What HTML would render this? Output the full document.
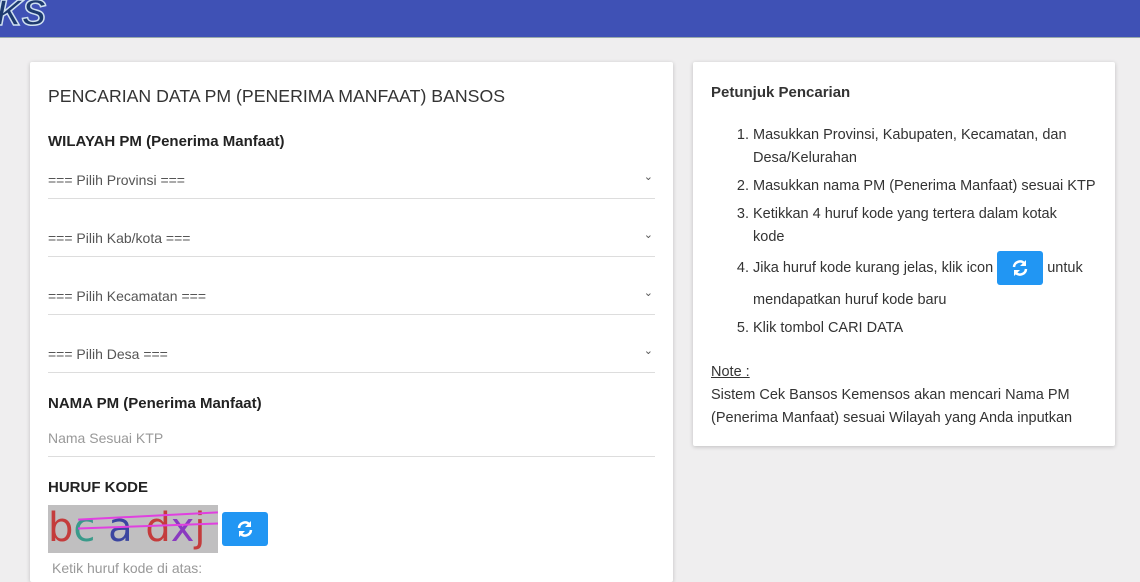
<!DOCTYPE html>
<html><head><style>
body{margin:0;width:1140px;height:570px;overflow:hidden;background:#efeeef;font-family:"Liberation Sans",sans-serif;color:#333;position:relative}
.top{position:absolute;left:0;top:0;width:1140px;height:37px;background:#3f51b5;border-bottom:1px solid #9aa}
.logo{position:absolute;left:-4px;top:-8px;font:italic bold 36px "Liberation Sans",sans-serif;color:#1d3a6e;-webkit-text-stroke:1.5px #cfe0f0}
.card{position:absolute;background:#fff;box-shadow:0 1px 4px rgba(0,0,0,.2);border-radius:2px}
.c1{left:30px;top:62px;width:643px;height:520px}
.c2{left:693px;top:62px;width:422px;height:384px}
.t{position:absolute;left:18px;font-size:17.7px;color:#333}
.h{position:absolute;left:18px;font-weight:bold;font-size:15px;color:#222}
.sel{position:absolute;left:18px;width:607px;height:26px;border-bottom:1px solid #ddd;font-size:14px;color:#555;line-height:16px}
.sel span{position:absolute;right:2px;top:-3px;font-size:11px}
.btn{position:absolute;background:#2196f3;border-radius:3px;text-align:center}
ol{margin:0;padding-left:42px;font-size:14.5px;line-height:23px;color:#333;white-space:nowrap}
li{margin-bottom:5px}
</style></head><body>
<div class="top"><div class="logo">KS</div></div>
<div class="card c1">
<div class="t" style="top:24px">PENCARIAN DATA PM (PENERIMA MANFAAT) BANSOS</div>
<div class="h" style="top:71px">WILAYAH PM (Penerima Manfaat)</div>
<div class="sel" style="top:110px">=== Pilih Provinsi ===<span>⌄</span></div>
<div class="sel" style="top:168px">=== Pilih Kab/kota ===<span>⌄</span></div>
<div class="sel" style="top:226px">=== Pilih Kecamatan ===<span>⌄</span></div>
<div class="sel" style="top:284px">=== Pilih Desa ===<span>⌄</span></div>
<div class="h" style="top:333px">NAMA PM (Penerima Manfaat)</div>
<div class="sel" style="top:368px;color:#999">Nama Sesuai KTP</div>
<div class="h" style="top:417px">HURUF KODE</div>
<div style="position:absolute;left:18px;top:443px;width:170px;height:48px;background:#c0bfc0;overflow:hidden;font-size:40px;line-height:46px;font-family:'DejaVu Sans',sans-serif">
<span style="color:#c43c3c">b</span><span style="color:#3a9a8a">c</span> <span style="color:#3b45a0">a</span> <span style="color:#c43c3c">d</span><span style="color:#8a3ac0">x</span><span style="color:#c43c3c">j</span>
<div style="position:absolute;left:30px;top:10px;width:140px;height:2px;background:#e040e0;transform:rotate(-3deg)"></div>
<div style="position:absolute;left:30px;top:20px;width:140px;height:2px;background:#e040e0;transform:rotate(-2deg)"></div></div>
<div class="btn" style="left:192px;top:450px;width:46px;height:34px"><svg width="20" height="20" viewBox="0 0 20 20" style="margin-top:7px"><path d="M4 9a6 6 0 0 1 10.5-3.5M16 11a6 6 0 0 1-10.5 3.5" stroke="#fff" stroke-width="2.5" fill="none"/><path d="M16 2v6h-6zM4 18v-6h6z" fill="#fff"/></svg></div>
<div style="position:absolute;left:22px;top:498px;font-size:14px;color:#999">Ketik huruf kode di atas:</div>
</div>
<div class="card c2">
<div style="position:absolute;left:18px;top:22px;font-size:15px;font-weight:bold;color:#333">Petunjuk Pencarian</div>
<div style="position:absolute;left:18px;top:62px;width:390px">
<ol>
<li>Masukkan Provinsi, Kabupaten, Kecamatan, dan<br>Desa/Kelurahan</li>
<li>Masukkan nama PM (Penerima Manfaat) sesuai KTP</li>
<li>Ketikkan 4 huruf kode yang tertera dalam kotak<br>kode</li>
<li style="line-height:31px;margin-top:-3px">Jika huruf kode kurang jelas, klik icon <span style="display:inline-block;vertical-align:middle;width:46px;height:34px;background:#2196f3;border-radius:3px;text-align:center"><svg width="20" height="20" viewBox="0 0 20 20" style="margin-top:7px"><path d="M4 9a6 6 0 0 1 10.5-3.5M16 11a6 6 0 0 1-10.5 3.5" stroke="#fff" stroke-width="2.5" fill="none"/><path d="M16 2v6h-6zM4 18v-6h6z" fill="#fff"/></svg></span> untuk<br>mendapatkan huruf kode baru</li>
<li style="margin-top:-4px">Klik tombol CARI DATA</li>
</ol></div>
<div style="position:absolute;left:18px;top:299px;font-size:14.5px;line-height:23px;color:#333;width:395px"><u>Note :</u><br>Sistem Cek Bansos Kemensos akan mencari Nama PM (Penerima Manfaat) sesuai Wilayah yang Anda inputkan</div>
</div>
</body></html>
